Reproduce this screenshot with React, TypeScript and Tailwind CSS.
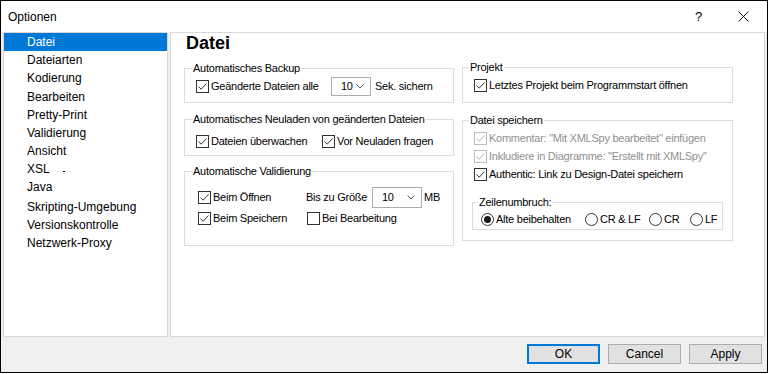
import React from "react";

const pages = [
  "Datei",
  "Dateiarten",
  "Kodierung",
  "Bearbeiten",
  "Pretty-Print",
  "Validierung",
  "Ansicht",
  "XSL",
  "Java",
  "Skripting-Umgebung",
  "Versionskontrolle",
  "Netzwerk-Proxy",
];

function Check({ checked, disabled }: { checked?: boolean; disabled?: boolean }) {
  return (
    <span
      className={
        disabled
          ? "w-[13px] h-[13px] border border-[#bcbcbc] bg-white flex items-center justify-center shrink-0"
          : "w-[13px] h-[13px] border border-[#333333] bg-white flex items-center justify-center shrink-0"
      }
    >
      {checked && (
        <svg width="11" height="11" viewBox="0 0 11 11">
          <path
            d="M1.5 5.5 L4.2 8.2 L9.5 2.5"
            fill="none"
            stroke={disabled ? "#b0b0b0" : "#333333"}
            strokeWidth="1"
          />
        </svg>
      )}
    </span>
  );
}

function Radio({ selected }: { selected?: boolean }) {
  return (
    <span className="w-[13px] h-[13px] rounded-full border border-[#333333] bg-white flex items-center justify-center shrink-0">
      {selected && <span className="w-[7px] h-[7px] rounded-full bg-[#1a1a1a]" />}
    </span>
  );
}

function Combo({ width, height }: { width: string; height: string }) {
  return (
    <div
      className={`${width} ${height} border border-[#adadad] bg-white flex items-center justify-between pl-[9px] pr-[6px] shrink-0`}
    >
      <span>10</span>
      <svg width="8" height="5" viewBox="0 0 8 5">
        <path d="M0.5 0.5 L4 4 L7.5 0.5" fill="none" stroke="#555555" strokeWidth="1" />
      </svg>
    </div>
  );
}

function Group({
  label,
  className,
  legendClass,
  children,
}: {
  label: string;
  className: string;
  legendClass: string;
  children: React.ReactNode;
}) {
  return (
    <fieldset className={`border border-[#dcdcdc] ${className}`}>
      <legend className={`px-[1px] leading-[14px] ${legendClass}`}>{label}</legend>
      {children}
    </fieldset>
  );
}

export default function App() {
  return (
    <div className="w-[768px] h-[373px] border border-black bg-white flex flex-col font-['Liberation_Sans',Arial,sans-serif] text-[12px] text-black">
      {/* title bar */}
      <div className="h-[31px] flex items-center pl-[7px] pr-[18px] shrink-0">
        <span>Optionen</span>
        <span className="ml-auto text-[13px] w-[8px]">?</span>
        <svg className="ml-[35px]" width="11" height="11" viewBox="0 0 11 11">
          <path d="M0.5 0.5 L10.5 10.5 M10.5 0.5 L0.5 10.5" stroke="#111111" strokeWidth="1" />
        </svg>
      </div>

      <div className="flex-1 bg-[#f0f0f0] flex flex-col">
        <div className="h-[305px] flex pl-[2px] pr-[2px] gap-[2px]">
          {/* page list */}
          <div className="w-[165px] border border-[#d9d9d9] bg-white flex flex-col">
            {pages.map((p, i) => (
              <div
                key={p}
                className={
                  i === 0
                    ? "h-[18px] leading-[18px] pl-[23px] bg-[#0078d7] text-white"
                    : p === "Kodierung"
                    ? "h-[19px] leading-[18px] pl-[23px]"
                    : p === "Java"
                    ? "h-[20px] leading-[18px] pl-[23px]"
                    : "h-[18px] leading-[18px] pl-[23px] flex"
                }
              >
                {p}
                {p === "XSL" && <span className="ml-[13px] mt-[11px] w-[2px] h-[1px] bg-black" />}
              </div>
            ))}
          </div>

          {/* settings */}
          <div className="flex-1 border border-[#d9d9d9] bg-white flex gap-[8px] pl-[13px] text-[11px] tracking-[-0.25px]">
            <div className="w-[270px] flex flex-col">
              <div className="h-[28px] pl-[2px] text-[18px] leading-[20px] font-bold tracking-normal">Datei</div>

              <Group label="Automatisches Backup" className="h-[42px]" legendClass="ml-[7px]">
                <div className="mt-[2px] h-[19px] flex items-center pl-[11px]">
                  <Check checked />
                  <span className="ml-[2px] w-[120px]">Geänderte Dateien alle</span>
                  <Combo width="w-[40px]" height="h-[19px]" />
                  <span className="ml-[4px]">Sek. sichern</span>
                </div>
              </Group>

              <Group
                label="Automatisches Neuladen von geänderten Dateien"
                className="h-[44px] mt-[9px]"
                legendClass="ml-[7px]"
              >
                <div className="mt-[7px] h-[16px] flex items-center pl-[11px]">
                  <Check checked />
                  <span className="ml-[2px] w-[111px]">Dateien überwachen</span>
                  <Check checked />
                  <span className="ml-[2px]">Vor Neuladen fragen</span>
                </div>
              </Group>

              <Group label="Automatische Validierung" className="h-[82px] mt-[8px]" legendClass="ml-[7px]">
                <div className="mt-[8px] h-[22px] flex items-center pl-[13px]">
                  <div className="w-[108px] flex items-center">
                    <Check checked />
                    <span className="ml-[2px]">Beim Öffnen</span>
                  </div>
                  <span className="w-[66px]">Bis zu Größe</span>
                  <Combo width="w-[50px]" height="h-[21px]" />
                  <span className="ml-[2px]">MB</span>
                </div>
                <div className="h-[20px] flex items-center pl-[13px]">
                  <div className="w-[108px] flex items-center">
                    <Check checked />
                    <span className="ml-[2px]">Beim Speichern</span>
                  </div>
                  <div className="ml-[1px] flex items-center">
                    <Check />
                    <span className="ml-[2px]">Bei Bearbeitung</span>
                  </div>
                </div>
              </Group>
            </div>

            <div className="w-[271px] flex flex-col pt-[27px]">
              <Group label="Projekt" className="h-[43px]" legendClass="ml-[6px]">
                <div className="mt-[3px] h-[16px] flex items-center pl-[11px]">
                  <Check checked />
                  <span className="ml-[2px]">Letztes Projekt beim Programmstart öffnen</span>
                </div>
              </Group>

              <Group label="Datei speichern" className="h-[128px] mt-[10px]" legendClass="ml-[6px]">
                <div className="mt-[2px] flex flex-col pl-[11px]">
                  <div className="h-[18px] flex items-center text-[#8f8f8f]">
                    <Check checked disabled />
                    <span className="ml-[2px]">Kommentar: "Mit XMLSpy bearbeitet" einfügen</span>
                  </div>
                  <div className="h-[18px] flex items-center text-[#8f8f8f]">
                    <Check checked disabled />
                    <span className="ml-[2px]">Inkludiere in Diagramme: "Erstellt mit XMLSpy"</span>
                  </div>
                  <div className="h-[18px] flex items-center">
                    <Check checked />
                    <span className="ml-[2px]">Authentic: Link zu Design-Datei speichern</span>
                  </div>
                </div>

                <Group label="Zeilenumbruch:" className="ml-[9px] mt-[12px] w-[251px] h-[35px]" legendClass="ml-[5px]">
                  <div className="mt-[3px] h-[14px] flex items-center pl-[8px] gap-[2px]">
                    <Radio selected />
                    <span className="w-[87px]">Alte beibehalten</span>
                    <Radio />
                    <span className="w-[47px]">CR &amp; LF</span>
                    <Radio />
                    <span className="w-[24px]">CR</span>
                    <Radio />
                    <span>LF</span>
                  </div>
                </Group>
              </Group>
            </div>
          </div>
        </div>

        {/* buttons */}
        <div className="flex-1 flex justify-end items-start pt-[7px] pr-[5px] gap-[8px]">
          <button className="w-[73px] h-[20px] border-2 border-[#0078d7] bg-[#e1e1e1] leading-none">OK</button>
          <button className="w-[73px] h-[20px] border border-[#adadad] bg-[#e1e1e1] leading-none">Cancel</button>
          <button className="w-[73px] h-[20px] border border-[#adadad] bg-[#e1e1e1] leading-none">Apply</button>
        </div>
      </div>
    </div>
  );
}
